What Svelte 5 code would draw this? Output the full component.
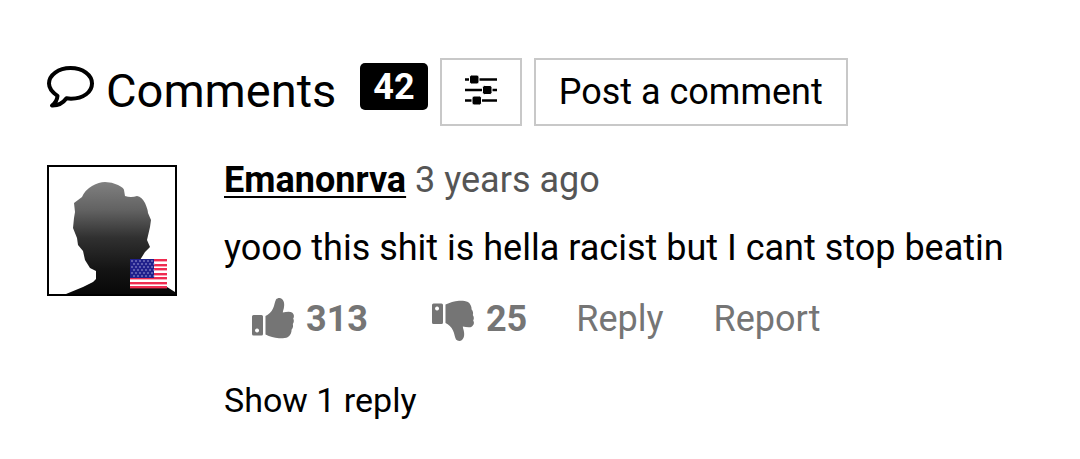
<script>
    let comment = {
        user: "Emanonrva",
        date: "3 years ago",
        text: "yooo this shit is hella racist but I cant stop beatin",
        up: 313,
        down: 25,
        replies: 1,
    };

    let total = 42;

    // flag canton: rows of stars
    let stars = [];
    for (let row = 0; row < 6; row++) {
        for (let col = 0; col < 6; col++) {
            stars.push({ x: 83 + col * 4 + (row % 2) * 2, y: 94 + row * 3 });
        }
    }
</script>

{#snippet thumb()}
    <path
        fill-rule="evenodd"
        d="M1.500 17h8q1.500 0 1.500 1.500v17.500q0 1.500-1.500 1.500h-8q-1.500 0-1.500-1.500V18.500Q0 17 1.500 17zM5 30.500a2 2 0 1 0 .1 0z"
    />
    <path
        d="M13.500 18c3-1.500 6-4 7.500-7.500 1.500-3 1.500-6 3-9 1.500-1.500 4-2 6-.5 2 2 2.500 4.500 2 8-.2 2-1 3.500-1.200 5.500C34 13.800 38 13 40 14.500c2 1.500 2.500 4 1.200 6 1 2 .8 4-.4 5.500.6 2 .2 4-1.200 5.500 0 3-1 5.500-3.600 7.500-2.500 1.300-6 1.500-9 1.300-5-.3-9-1.800-13.500-3.800z"
    />
{/snippet}

<div class="comments">
    <header>
        <h2>
            <svg class="bubble" viewBox="0 0 47 42" aria-hidden="true">
                <path
                    d="M23.500 2C11.500 2 2 9 2 17.500c0 5 3.500 9 8.500 12.300-.3 4-2 7-5.500 9.700 6 .2 11-2.500 14.500-7.200 1.500.3 3 .4 4.500.4 12.500 0 21-6.800 21-15.200S36 2 23.500 2z"
                />
            </svg>
            Comments
        </h2>
        <span class="badge">{total}</span>
        <button class="btn filter" aria-label="Filter comments">
            <svg viewBox="0 0 32 30" aria-hidden="true">
                <path d="M0 4.500h32M0 15h32M0 25.500h32" stroke="#000" stroke-width="2.500" />
                <g stroke="#fff" stroke-width="1">
                    <rect x="4.500" y="0" width="9.500" height="9" rx="2" />
                    <rect x="17.500" y="10.500" width="9.500" height="9" rx="2" />
                    <rect x="7" y="21" width="9.500" height="9" rx="2" />
                </g>
            </svg>
        </button>
        <button class="btn">Post a comment</button>
    </header>

    <article>
        <a class="avatar" href="#profile" aria-label={comment.user}>
            <svg viewBox="0 0 126 127" aria-hidden="true">
                <defs>
                    <linearGradient id="shade" x1="0" y1="0" x2="0" y2="1">
                        <stop offset="0" stop-color="#808080" />
                        <stop offset=".25" stop-color="#626262" />
                        <stop offset=".5" stop-color="#303030" />
                        <stop offset=".78" stop-color="#141414" />
                        <stop offset="1" stop-color="#080808" />
                    </linearGradient>
                </defs>
                <path
                    fill="url(#shade)"
                    d="M17 127L34 120 44 115 47 112 47 104 41 101 36 93 34 84 29 78 28 71 24 61 25 51 26 45 25 36 33 30Q36 23 43 19 50 15 56 15 63 15 69 18 75 21 75 23L76 29Q82 31 88 29 93 30 96 36 99 43 99 46L102 53 101 60 98 73 101 80 96 85 91 93 84 101V117L118 120 126 125V127z"
                />
                <path fill="#fff" d="M91 93L84 101V114Q92 118 118 121V92z" />
                <rect x="81" y="92" width="37" height="29" fill="#fff" />
                {#each [92, 97, 101, 106, 110, 115, 119] as y}
                    <rect x="81" {y} width="37" height="2.400" fill="#ef2b50" />
                {/each}
                <rect x="81" y="92" width="24" height="19" fill="#20208c" />
                {#each stars as s}
                    <circle cx={s.x} cy={s.y} r=".8" fill="#aaa9e0" />
                {/each}
            </svg>
        </a>

        <div class="body">
            <div class="meta">
                <a href="#profile">{comment.user}</a>
                <span>{comment.date}</span>
            </div>
            <p>{comment.text}</p>
            <div class="actions">
                <button class="vote" aria-label="Like">
                    <svg viewBox="0 0 42 41" aria-hidden="true">
                        {@render thumb()}
                    </svg>
                    {comment.up}
                </button>
                <button class="vote" aria-label="Dislike">
                    <svg class="dislike" viewBox="0 0 42 41" aria-hidden="true">
                        {@render thumb()}
                    </svg>
                    {comment.down}
                </button>
                <button class="reply">Reply</button>
                <button class="report">Report</button>
            </div>
            <button class="replies">Show {comment.replies} reply</button>
        </div>
    </article>
</div>

<style>
    :global(body) {
        margin: 0;
        background: #fff;
    }

    .comments {
        padding: 58px 47px 36px;
        font-family: Roboto, sans-serif;
        font-size: 36px;
        line-height: 44px;
        color: #000;
    }

    header {
        display: flex;
        align-items: flex-start;
        gap: 12px;
    }

    h2 {
        display: flex;
        gap: 12px;
        margin: 0 12px 0 0;
        font-size: 47px;
        font-weight: 400;
        line-height: 66px;
    }

    .bubble {
        width: 47px;
        height: 42px;
        margin-top: 8px;
        fill: none;
        stroke: #000;
        stroke-width: 4;
        stroke-linejoin: round;
    }

    .badge {
        margin-top: 5px;
        padding: 2px 13px 0;
        border-radius: 5px;
        background: #000;
        color: #fff;
        font-weight: 700;
        line-height: 45px;
    }

    button {
        padding: 0;
        border: 0;
        background: none;
        color: inherit;
        font: inherit;
        cursor: pointer;
    }

    .btn {
        height: 68px;
        padding: 0 23px;
        border: 2px solid #c8c8c8;
        white-space: nowrap;
    }

    .filter {
        padding-bottom: 5px;
    }

    .filter svg {
        display: block;
        width: 32px;
        height: 30px;
    }

    article {
        display: flex;
        align-items: flex-start;
        gap: 47px;
        margin-top: 39px;
    }

    .avatar {
        flex: none;
        border: 2px solid #000;
    }

    .avatar svg {
        display: block;
        width: 126px;
        height: 127px;
    }

    .body {
        flex: 1;
        min-width: 0;
        margin-top: -7px;
    }

    .meta a {
        color: #000;
        font-weight: 700;
        text-decoration-thickness: 2px;
        text-underline-offset: 4px;
    }

    .meta span {
        color: #555;
    }

    p {
        margin: 24px 0 26px;
    }

    .actions {
        display: flex;
        align-items: center;
        padding-left: 28px;
        color: #757575;
    }

    .vote {
        display: flex;
        align-items: center;
        gap: 12px;
        margin-right: 64px;
        font-weight: 700;
    }

    .vote + .reply {
        margin-left: -15px;
    }

    .vote svg {
        width: 42px;
        height: 41px;
        fill: #757575;
    }

    .vote .dislike {
        margin-top: 4px;
        transform: scaleY(-1);
    }

    .report {
        margin-left: 50px;
    }

    .replies {
        margin-top: 37px;
        font-size: 34px;
    }
</style>
